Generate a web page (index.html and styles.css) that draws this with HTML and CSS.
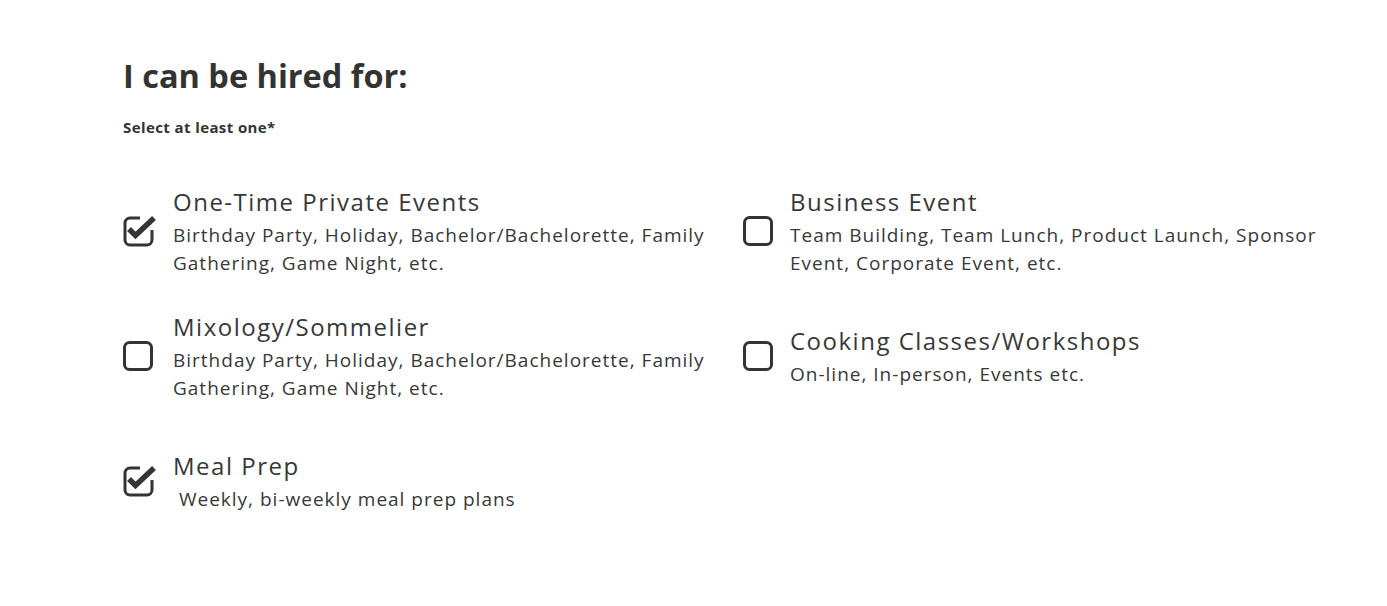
FILE: index.html
```html
<!DOCTYPE html>
<html lang="en">
<head>
    <meta charset="UTF-8">
    <meta name="viewport" content="width=device-width, initial-scale=1.0">
    <title>I can be hired for</title>

    <link rel="stylesheet" href="styles.css">
</head>
<body>

    <div class="container">
        <h1>I can be hired for:</h1>
        <p class="hint">Select at least one*</p>

        <div class="options">
            <!-- Row 1 -->
            <label class="option">
                <svg class="box" viewBox="0 0 34 32" width="34" height="32">
                    <path d="M17 2H7A5 5 0 0 0 2 7V24A5 5 0 0 0 7 29H24A5 5 0 0 0 29 24V14" fill="none" stroke="#343434" stroke-width="3"/>
                    <polyline points="6,13 12.5,19.5 31,2" fill="none" stroke="#343434" stroke-width="5.5"/>
                </svg>
                <div class="text">
                    <div class="title">One-Time Private Events</div>
                    <div class="desc">Birthday Party, Holiday, Bachelor/Bachelorette, Family Gathering, Game Night, etc.</div>
                </div>
            </label>

            <label class="option">
                <svg class="box" viewBox="0 0 34 32" width="34" height="32">
                    <rect x="1.5" y="1.5" width="27" height="27" rx="5" fill="none" stroke="#343434" stroke-width="3"/>
                </svg>
                <div class="text">
                    <div class="title">Business Event</div>
                    <div class="desc">Team Building, Team Lunch, Product Launch, Sponsor Event, Corporate Event, etc.</div>
                </div>
            </label>

            <!-- Row 2 -->
            <label class="option">
                <svg class="box" viewBox="0 0 34 32" width="34" height="32">
                    <rect x="1.5" y="1.5" width="27" height="27" rx="5" fill="none" stroke="#343434" stroke-width="3"/>
                </svg>
                <div class="text">
                    <div class="title">Mixology/Sommelier</div>
                    <div class="desc">Birthday Party, Holiday, Bachelor/Bachelorette, Family Gathering, Game Night, etc.</div>
                </div>
            </label>

            <label class="option">
                <svg class="box" viewBox="0 0 34 32" width="34" height="32">
                    <rect x="1.5" y="1.5" width="27" height="27" rx="5" fill="none" stroke="#343434" stroke-width="3"/>
                </svg>
                <div class="text">
                    <div class="title">Cooking Classes/Workshops</div>
                    <div class="desc">On-line, In-person, Events etc.</div>
                </div>
            </label>

            <!-- Row 3 -->
            <label class="option last">
                <svg class="box" viewBox="0 0 34 32" width="34" height="32">
                    <path d="M17 2H7A5 5 0 0 0 2 7V24A5 5 0 0 0 7 29H24A5 5 0 0 0 29 24V14" fill="none" stroke="#343434" stroke-width="3"/>
                    <polyline points="6,13 12.5,19.5 31,2" fill="none" stroke="#343434" stroke-width="5.5"/>
                </svg>
                <div class="text">
                    <div class="title">Meal Prep</div>
                    <div class="desc">&nbsp;Weekly, bi-weekly meal prep plans</div>
                </div>
            </label>
        </div>
    </div>

</body>
</html>
```

FILE: styles.css
```css
* {
    margin: 0;
    padding: 0;
    box-sizing: border-box;
}
body {
    background: #fff;
    color: #383838;
    font-family: 'Open Sans', 'Noto Sans', sans-serif;
}
.container {
    padding: 52px 0 0 123px;
}
h1 {
    font-size: 32.5px;
    font-weight: 700;
    line-height: 48px;
    color: #333;
}
.hint {
    font-size: 15px;
    font-weight: 700;
    letter-spacing: 0.4px;
    line-height: 20px;
    margin-top: 17px;
    color: #333;
}
.options {
    display: grid;
    grid-template-columns: 620px 620px;
    align-items: center;
    row-gap: 35px;
    margin-top: 50px;
}
.option {
    display: flex;
    align-items: center;
    gap: 16px;
    cursor: pointer;
}
.option:nth-child(even) {
    gap: 13px;
}
.option.last {
    margin-top: 14px;
}
.box {
    flex: none;
}
.text {
    width: 560px;
}
.title {
    font-size: 24px;
    letter-spacing: 1.5px;
    line-height: 30px;
    margin-bottom: 4px;
}
.desc {
    font-size: 19px;
    letter-spacing: 1px;
    line-height: 28px;
}
```
